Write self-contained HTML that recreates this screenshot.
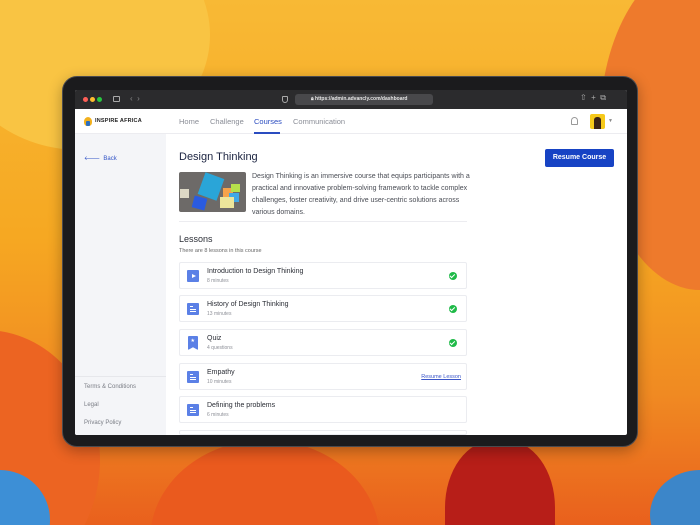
<!DOCTYPE html>
<html><head><meta charset="utf-8"><style>
*{margin:0;padding:0;box-sizing:border-box}
html,body{width:700px;height:525px;overflow:hidden}
body{position:relative;font-family:"Liberation Sans",sans-serif;
background:linear-gradient(180deg,#f8b935 0%,#f6a822 45%,#f08a22 75%,#e9601d 100%);}
.bg{position:absolute;left:0;top:0;width:700px;height:525px;overflow:hidden}
.bg div{position:absolute;border-radius:50%}
.dev{position:absolute;left:62px;top:76px;width:576px;height:371px;background:#1b1b1d;border-radius:15px;border:1.5px solid #4a4a4e;box-shadow:0 4px 14px rgba(0,0,0,.3)}
.scr{position:absolute;left:75px;top:90px;width:552px;height:345px;background:#fff;overflow:hidden;border-radius:2px}
.tb{position:absolute;left:0;top:0;width:552px;height:19px;background:#2b2b2d}
.dot{position:absolute;top:7px;width:5px;height:5px;border-radius:50%}
.url{position:absolute;left:220px;top:4px;width:138px;height:11px;background:#48484b;border-radius:3px;color:#e6e6e6;font-size:5px;line-height:11px;padding-left:16px;font-weight:bold}
.nav{position:absolute;left:0;top:19px;width:552px;height:25px;border-bottom:1px solid #ececf0;background:#fff}
.nav span.i{position:absolute;top:8px;font-size:7.5px;color:#8a8d96}
.side{position:absolute;left:0;top:44px;width:91px;height:301px;background:#f4f5f8}
.side .l{position:absolute;left:9px;font-size:6px;color:#7a7d85}
.t{position:absolute;color:#1b2340}
.card{position:absolute;left:104px;width:288px;height:27px;border:1px solid #ebecf0;border-radius:2px;background:#fff}
.card .ic{position:absolute;left:7px;top:7px;width:12px;height:12px;background:#5b80e6;border-radius:1px}
.card .n{position:absolute;left:27px;top:5px;font-size:7px;color:#2a2d35}
.card .m{position:absolute;left:27px;top:15px;font-size:5px;color:#8e9098}
.chk{position:absolute;right:9px;top:9px;width:8px;height:8px;border-radius:50%;background:#1fba48}
.chk:after{content:"";position:absolute;left:2.3px;top:1.4px;width:2px;height:3.5px;border:solid #fff;border-width:0 1.1px 1.1px 0;transform:rotate(45deg)}
.lines{position:absolute;left:3px;width:6px;height:1.2px;background:#fff}
</style></head><body>
<div class="bg">
<div style="left:-90px;top:-120px;width:190px;height:200px;background:#7cc0e8"></div>
<div style="left:-50px;top:-80px;width:260px;height:230px;background:#f9c443"></div>
<div style="left:600px;top:-40px;width:200px;height:330px;background:#ee7a2c"></div>
<div style="left:-130px;top:330px;width:230px;height:260px;background:#ec6422"></div>
<div style="left:-50px;top:470px;width:100px;height:100px;background:#3d8fd6"></div>
<div style="left:150px;top:440px;width:230px;height:200px;background:#ea5a1e"></div>
<div style="left:445px;top:440px;width:110px;height:150px;background:#b71e18;border-radius:45% 45% 0 0"></div>
<div style="left:650px;top:470px;width:100px;height:90px;background:#3c86c9"></div>
</div>
<div class="dev"></div>
<div class="scr">
 <div class="tb">
  <div class="dot" style="left:8px;background:#fe5f57"></div>
  <div class="dot" style="left:15px;background:#febc2e"></div>
  <div class="dot" style="left:22px;background:#28c840"></div>
  <div style="position:absolute;left:38px;top:6px;width:7px;height:6px;border:1px solid #aaa;border-radius:1px"></div>
  <div style="position:absolute;left:55px;top:4px;color:#888;font-size:8px">‹ &nbsp;›</div>
  <div style="position:absolute;left:207px;top:6px;width:6px;height:7px;border:1px solid #aaa;border-radius:1px 1px 3px 3px"></div>
  <div class="url">🔒︎ https://admin.advancly.com/dashboard</div>
  <div style="position:absolute;left:505px;top:3px;color:#aaa;font-size:8px">⇧ &nbsp;+ &nbsp;⧉</div>
 </div>
 <div class="nav">
  <div style="position:absolute;left:9px;top:8px;width:8px;height:9px;background:#f2b01e;border-radius:50% 50% 40% 40%"></div>
  <div style="position:absolute;left:11px;top:12px;width:4px;height:5px;background:#2d6fc0;border-radius:1px"></div>
  <span style="position:absolute;left:20px;top:9px;font-size:5.5px;font-weight:bold;color:#222;letter-spacing:.2px">INSPIRE AFRICA</span>
  <span class="i" style="left:104px">Home</span>
  <span class="i" style="left:135px">Challenge</span>
  <span class="i" style="left:179px;color:#2a4cc0">Courses</span>
  <div style="position:absolute;left:179px;top:23px;width:26px;height:2px;background:#2a4cc0"></div>
  <span class="i" style="left:218px">Communication</span>
  <div style="position:absolute;left:496px;top:8px;width:7px;height:8px;border:1px solid #999;border-radius:4px 4px 1px 1px"></div>
  <div style="position:absolute;left:515px;top:5px;width:15px;height:15px;background:#f6c91a;border-radius:2px;overflow:hidden"><div style="position:absolute;left:4px;top:3px;width:7px;height:13px;background:#3a2216;border-radius:3px 3px 0 0"></div></div>
  <span style="position:absolute;left:533px;top:9px;font-size:5px;color:#888">▼</span>
 </div>
 <div class="side">
  <div class="l" style="top:21px;color:#3052c6">🡐&nbsp; Back</div>
  <div style="position:absolute;left:0;top:242px;width:91px;height:1px;background:#e6e7eb"></div>
  <div class="l" style="top:250px">Terms &amp; Conditions</div>
  <div class="l" style="top:268px">Legal</div>
  <div class="l" style="top:286px">Privacy Policy</div>
 </div>
 <div class="t" style="left:104px;top:61px;font-size:11px">Design Thinking</div>
 <div style="position:absolute;left:470px;top:59px;width:69px;height:18px;background:#1743c4;border-radius:2px;color:#fff;font-size:7px;font-weight:bold;text-align:center;line-height:18px">Resume Course</div>
 <div style="position:absolute;left:104px;top:82px;width:67px;height:40px;border-radius:2px;background:#6d6a68;overflow:hidden">
  <div style="position:absolute;left:22px;top:3px;width:20px;height:23px;background:#2aa5d8;transform:rotate(20deg)"></div>
  <div style="position:absolute;left:44px;top:16px;width:10px;height:9px;background:#f5a24a"></div>
  <div style="position:absolute;left:52px;top:12px;width:9px;height:8px;background:#b5e04b"></div>
  <div style="position:absolute;left:50px;top:21px;width:10px;height:9px;background:#40a8e6"></div>
  <div style="position:absolute;left:41px;top:25px;width:14px;height:11px;background:#ece59b"></div>
  <div style="position:absolute;left:14px;top:25px;width:13px;height:12px;background:#2a5be0;transform:rotate(15deg)"></div>
  <div style="position:absolute;left:1px;top:17px;width:9px;height:9px;background:#ddd8c5"></div>
 </div>
 <div style="position:absolute;left:177px;top:81px;width:222px;font-size:7px;line-height:12px;color:#4a4d55">Design Thinking is an immersive course that equips participants with a practical and innovative problem-solving framework to tackle complex challenges, foster creativity, and drive user-centric solutions across various domains.</div>
 <div style="position:absolute;left:104px;top:131px;width:288px;height:1px;background:#ececf0"></div>
 <div class="t" style="left:104px;top:144px;font-size:9px;color:#2a2d35">Lessons</div>
 <div style="position:absolute;left:104px;top:158px;font-size:5.5px;color:#666">There are 8 lessons in this course</div>

 <div class="card" style="top:172px"><div class="ic"><div style="position:absolute;left:4.5px;top:3.5px;border-left:4px solid #fff;border-top:2.5px solid transparent;border-bottom:2.5px solid transparent"></div></div><div class="n">Introduction to Design Thinking</div><div class="m">8 minutes</div><div class="chk"></div></div>
 <div class="card" style="top:205px"><div class="ic"><div class="lines" style="top:3px;width:3px"></div><div class="lines" style="top:5.5px"></div><div class="lines" style="top:8px"></div></div><div class="n">History of Design Thinking</div><div class="m">13 minutes</div><div class="chk"></div></div>
 <div class="card" style="top:239px"><div class="ic" style="width:10px;height:14px;top:6px;left:8px;clip-path:polygon(0 0,100% 0,100% 100%,50% 80%,0 100%)"><div style="position:absolute;left:2.5px;top:2px;color:#fff;font-size:5px">★</div></div><div class="n">Quiz</div><div class="m">4 questions</div><div class="chk"></div></div>
 <div class="card" style="top:273px"><div class="ic"><div class="lines" style="top:3px;width:3px"></div><div class="lines" style="top:5.5px"></div><div class="lines" style="top:8px"></div></div><div class="n">Empathy</div><div class="m">10 minutes</div><div style="position:absolute;right:5px;top:10px;font-size:5.5px;color:#3a55c8;text-decoration:underline">Resume Lesson</div></div>
 <div class="card" style="top:306px"><div class="ic"><div class="lines" style="top:3px;width:3px"></div><div class="lines" style="top:5.5px"></div><div class="lines" style="top:8px"></div></div><div class="n">Defining the problems</div><div class="m">6 minutes</div></div>
 <div class="card" style="top:340px;height:5px"></div>
</div>
</body></html>
